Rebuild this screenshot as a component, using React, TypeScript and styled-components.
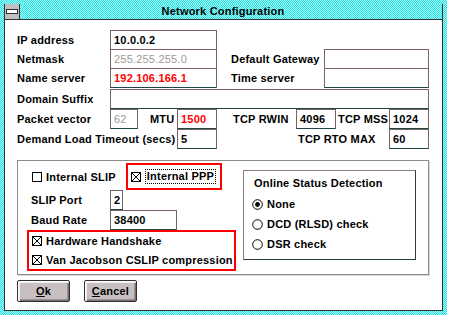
import React from "react"
import styled, { createGlobalStyle } from "styled-components"

const GlobalStyle = createGlobalStyle`
	body {
		margin: 0;
		background: #ffffff;
		font-family: "Liberation Sans", Arial, sans-serif;
		font-size: 11px;
		font-weight: bold;
		letter-spacing: 0.2px;
		color: #000000;
	}
`

const dither = `repeating-conic-gradient(#18e8e8 0 25%, #b8f4f4 0 50%) 0 0 / 2px 2px`

const Frame = styled.div`
	width: 447px;
	height: 315px;
	box-sizing: border-box;
	padding: 4px;
	background: ${dither};
	display: flex;
`

const Inner = styled.div`
	flex: 1;
	display: flex;
	flex-direction: column;
	border: 1px solid #303030;
	border-top: none;
`

const TitleBar = styled.div`
	height: 15px;
	display: flex;
	align-items: center;
	background: ${dither};
	border-bottom: 1px solid #303030;
`

const SysMenu = styled.div`
	width: 16px;
	height: 15px;
	box-sizing: border-box;
	background: #c0c0c0;
	border-left: 1px solid #303030;
	border-right: 1px solid #303030;
	margin-left: -1px;
	display: flex;
	align-items: center;
	justify-content: center;
	span {
		width: 10px;
		height: 3px;
		background: #ffffff;
		border: 1px solid #303030;
	}
`

const Title = styled.div`
	flex: 1;
	text-align: center;
	padding-right: 16px;
	line-height: 15px;
`

const Client = styled.div`
	flex: 1;
	background: #ffffff;
	padding: 10px 0 0 12px;
	display: flex;
	flex-direction: column;
`

const Row = styled.div<{ $h?: number; $mt?: number }>`
	display: flex;
	align-items: flex-start;
	height: ${(p) => p.$h ?? 20}px;
	margin-top: ${(p) => p.$mt ?? 0}px;
`

const Label = styled.div<{ $w: number; $pl?: number }>`
	width: ${(p) => p.$w}px;
	padding-left: ${(p) => p.$pl ?? 0}px;
	box-sizing: border-box;
	height: 20px;
	line-height: 21px;
	white-space: nowrap;
	flex-shrink: 0;
`

const Field = styled.div<{ $w: number; $color?: string; $weight?: string }>`
	width: ${(p) => p.$w}px;
	height: 20px;
	box-sizing: border-box;
	flex-shrink: 0;
	border: 1px solid #7a6262;
	border-bottom-color: #1e4646;
	background: #ffffff;
	padding-left: 3px;
	line-height: 18px;
	color: ${(p) => p.$color ?? "#000000"};
	font-weight: ${(p) => p.$weight ?? "bold"};
	white-space: nowrap;
	overflow: hidden;
`

const Group = styled.div`
	width: 412px;
	height: 115px;
	box-sizing: border-box;
	margin-top: 11px;
	border: 1px solid #8c8c8c;
	box-shadow: 1px 1px 0 #d8d8d8;
	padding: 2px 0 0 9px;
	display: flex;
`

const LeftCol = styled.div`
	width: 216px;
	display: flex;
	flex-direction: column;
`

const Highlight = styled.div<{ $w: number; $h: number; $ml?: number }>`
	width: ${(p) => p.$w}px;
	height: ${(p) => p.$h}px;
	margin-left: ${(p) => p.$ml ?? 0}px;
	box-sizing: border-box;
	border: 2px solid #ff0000;
	display: flex;
	flex-direction: column;
	justify-content: center;
`

const Check = styled.div<{ $ml?: number; $h?: number }>`
	display: flex;
	align-items: center;
	height: ${(p) => p.$h ?? 20}px;
	margin-left: ${(p) => p.$ml ?? 0}px;
	white-space: nowrap;
	svg {
		flex-shrink: 0;
		margin-right: 4px;
	}
`

const Focus = styled.span`
	border: 1px dotted #000000;
	padding: 0 1px;
	line-height: 13px;
`

const StatusBox = styled.div`
	width: 173px;
	height: 90px;
	box-sizing: border-box;
	margin-top: 7px;
	border: 1px solid #8c7a7a;
	border-right-color: #2a4040;
	border-bottom-color: #2a4040;
	padding: 3px 0 0 8px;
	display: flex;
	flex-direction: column;
`

const StatusTitle = styled.div`
	height: 20px;
	line-height: 18px;
	padding-left: 2px;
`

const Buttons = styled.div`
	display: flex;
	gap: 14px;
	margin-top: 5px;
`

const Button = styled.div`
	width: 53px;
	height: 22px;
	box-sizing: border-box;
	border: 1px solid #303030;
	border-radius: 2px;
	background: #c8c0c0;
	box-shadow: inset 1px 1px 0 #ffffff, inset 2px 2px 0 #f0ecec, inset -1px -1px 0 #7a7070, inset -2px -2px 0 #9a9090;
	display: flex;
	align-items: center;
	justify-content: center;
	u {
		text-decoration: underline;
	}
`

const CheckBox = ({ checked }: { checked?: boolean }) => (
	<svg width="10" height="10" viewBox="0 0 10 10">
		<rect x="0.5" y="0.5" width="9" height="9" fill="#fff" stroke="#000" />
		{checked && <path d="M1 1 L9 9 M9 1 L1 9" stroke="#000" strokeWidth="1" />}
	</svg>
)

const Radio = ({ on }: { on?: boolean }) => (
	<svg width="11" height="11" viewBox="0 0 11 11">
		<circle cx="5.5" cy="5.5" r="4.8" fill="#fff" stroke="#000" strokeWidth="1" />
		{on && <circle cx="5.5" cy="5.5" r="2.4" fill="#000" />}
	</svg>
)

const App = () => {
	return (
		<>
			<GlobalStyle />
			<Frame>
				<Inner>
					<TitleBar>
						<SysMenu>
							<span />
						</SysMenu>
						<Title>Network Configuration</Title>
					</TitleBar>
					<Client>
						<Row $h={19}>
							<Label $w={93}>IP address</Label>
							<Field $w={107}>10.0.0.2</Field>
						</Row>
						<Row $h={19}>
							<Label $w={93}>Netmask</Label>
							<Field $w={107} $color="#a09898" $weight="normal">
								255.255.255.0
							</Field>
							<Label $w={107} $pl={14}>
								Default Gateway
							</Label>
							<Field $w={105} />
						</Row>
						<Row $h={19}>
							<Label $w={93}>Name server</Label>
							<Field $w={107} $color="#ff0000">
								192.106.166.1
							</Field>
							<Label $w={107} $pl={14}>
								Time server
							</Label>
							<Field $w={105} />
						</Row>
						<Row $mt={2}>
							<Label $w={93}>Domain Suffix</Label>
							<Field $w={319} />
						</Row>
						<Row>
							<Label $w={93}>Packet vector</Label>
							<Field $w={28} $color="#a09898" $weight="normal">
								62
							</Field>
							<Label $w={39} $pl={12}>
								MTU
							</Label>
							<Field $w={40} $color="#ff0000">
								1500
							</Field>
							<Label $w={79} $pl={16}>
								TCP RWIN
							</Label>
							<Field $w={40}>4096</Field>
							<Label $w={53} $pl={2}>
								TCP MSS
							</Label>
							<Field $w={40}>1024</Field>
						</Row>
						<Row>
							<Label $w={160}>Demand Load Timeout (secs)</Label>
							<Field $w={40}>5</Field>
							<Label $w={172} $pl={81}>
								TCP RTO MAX
							</Label>
							<Field $w={40}>60</Field>
						</Row>
						<Group>
							<LeftCol>
								<Row $h={27}>
									<Check $ml={5} $h={27}>
										<CheckBox />
										Internal SLIP
									</Check>
									<Highlight $w={96} $h={27} $ml={10}>
										<Check $ml={3}>
											<CheckBox checked />
											<Focus>Internal PPP</Focus>
										</Check>
									</Highlight>
								</Row>
								<Row>
									<Label $w={83} $pl={4}>
										SLIP Port
									</Label>
									<Field $w={13}>2</Field>
								</Row>
								<Row>
									<Label $w={83} $pl={4}>
										Baud Rate
									</Label>
									<Field $w={67}>38400</Field>
								</Row>
								<Highlight $w={209} $h={41}>
									<Check $ml={3}>
										<CheckBox checked />
										Hardware Handshake
									</Check>
									<Check $ml={3}>
										<CheckBox checked />
										Van Jacobson CSLIP compression
									</Check>
								</Highlight>
							</LeftCol>
							<StatusBox>
								<StatusTitle>Online Status Detection</StatusTitle>
								<Check>
									<Radio on />
									None
								</Check>
								<Check>
									<Radio />
									DCD (RLSD) check
								</Check>
								<Check>
									<Radio />
									DSR check
								</Check>
							</StatusBox>
						</Group>
						<Buttons>
							<Button>
								<span>
									<u>O</u>k
								</span>
							</Button>
							<Button>
								<span>
									<u>C</u>ancel
								</span>
							</Button>
						</Buttons>
					</Client>
				</Inner>
			</Frame>
		</>
	)
}

export default App
